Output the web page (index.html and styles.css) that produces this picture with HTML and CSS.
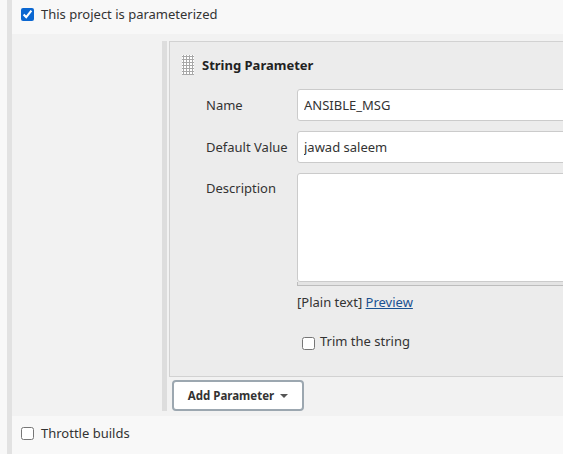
FILE: index.html
```html
<!DOCTYPE html>
<html>
<head>
<meta charset="utf-8">
<link rel="stylesheet" href="styles.css">
</head>
<body>
<div class="page">
  <div class="section">
    <div class="row top-row">
      <label class="check"><input type="checkbox" checked> <span>This project is parameterized</span></label>
    </div>
    <div class="nested">
      <div class="nest-inner">
        <div class="panel">
          <div class="panel-head">
            <span class="grip"></span>
            <span class="panel-title">String Parameter</span>
          </div>
          <div class="fields">
            <div class="lbl lbl-mid">Name</div>
            <div class="ctl"><input class="txt" type="text" value="ANSIBLE_MSG"></div>
            <div class="lbl lbl-mid">Default Value</div>
            <div class="ctl"><input class="txt" type="text" value="jawad saleem"></div>
            <div class="lbl lbl-top">Description</div>
            <div class="ctl">
              <textarea class="area"></textarea>
              <div class="grippie"></div>
              <div class="hint">[Plain text] <a href="#">Preview</a></div>
            </div>
            <div></div>
            <div class="ctl trim"><label class="check"><input type="checkbox"> <span>Trim the string</span></label></div>
          </div>
        </div>
        <button class="add-btn" type="button">Add Parameter <span class="caret"></span></button>
      </div>
    </div>
    <div class="row bottom-row">
      <label class="check"><input type="checkbox"> <span>Throttle builds</span></label>
    </div>
  </div>
</div>
</body>
</html>
```

FILE: styles.css
```css
html, body {
  margin: 0;
  padding: 0;
  background: #f8f8f8;
  overflow: hidden;
  height: 454px;
}
body {
  font-family: "Noto Sans", "Open Sans", sans-serif;
  font-size: 13px;
  color: #333;
}
.page {
  padding-left: 7px;
}
.section {
  border-left: 5px solid #e2e2e2;
  height: 454px;
}
.row {
  display: flex;
  align-items: center;
}
.top-row {
  height: 34px;
  box-sizing: border-box;
  padding-bottom: 6px;
}
.bottom-row {
  height: 38px;
  box-sizing: border-box;
  padding-bottom: 4px;
}
.check {
  display: flex;
  align-items: center;
  gap: 7px;
  color: #333;
}
.check input {
  margin: 0;
  width: 13px;
  height: 13px;
}
.top-row .check, .bottom-row .check {
  padding-left: 9px;
}
.check input[checked] {
  accent-color: #0b67d1;
}
.nested {
  background: #f2f2f2;
  padding: 7px 0 5px 0;
}
.nest-inner {
  margin-left: 150px;
  border-left: 5px solid #dddddd;
  padding-left: 2px;
  margin-right: -80px;
}
.panel {
  border: 1px solid #d2d2d2;
  background: #ececec;
  height: 336px;
  box-sizing: border-box;
  padding: 13px 0 0 12px;
}
.panel-head {
  display: flex;
  align-items: center;
  height: 20px;
}
.grip {
  width: 12px;
  height: 20px;
  background-color: #fff;
  background-image: radial-gradient(circle, #a8a8a8 1px, transparent 1.2px);
  background-size: 3px 3px;
  background-position: 0 0;
}
.panel-title {
  margin-left: 8px;
  font-weight: bold;
  color: #222;
}
.fields {
  display: grid;
  grid-template-columns: 91px 1fr;
  row-gap: 10px;
  margin-top: 14px;
  padding-left: 24px;
}
.lbl {
  color: #333;
}
.lbl-mid {
  display: flex;
  align-items: center;
}
.lbl-top {
  padding-top: 6px;
}
.txt {
  box-sizing: border-box;
  width: 100%;
  height: 32px;
  border: 1px solid #cbcbcb;
  border-radius: 3px;
  background: #fff;
  font: inherit;
  color: #333;
  padding: 0 6px;
  display: block;
}
.area {
  display: block;
  box-sizing: border-box;
  width: 100%;
  height: 109px;
  border: 1px solid #cbcbcb;
  border-radius: 3px;
  background: #fff;
  resize: none;
  margin: 0;
}
.grippie {
  height: 3px;
  background: #e4e4e4;
  border: 1px solid #bdbdbd;
  border-top: none;
}
.hint {
  margin-top: 8px;
  line-height: 16px;
}
.hint a {
  color: #1a5191;
}
.trim {
  padding-top: 12px;
  padding-left: 5px;
}
.trim .check {
  gap: 5px;
  align-items: flex-start;
  line-height: 18px;
}
.trim .check input {
  margin-top: 5px;
}
.add-btn {
  margin: 3px 0 0 3px;
  width: 132px;
  height: 31px;
  border: 2px solid #9ca7b0;
  border-radius: 4px;
  background: #fff;
  font-family: inherit;
  font-size: 11.5px;
  font-weight: bold;
  color: #333;
  padding: 0;
  display: flex;
  align-items: center;
  justify-content: center;
  gap: 6px;
}
.caret {
  width: 0;
  height: 0;
  border-left: 4px solid transparent;
  border-right: 4px solid transparent;
  border-top: 4px solid #555;
}
```
